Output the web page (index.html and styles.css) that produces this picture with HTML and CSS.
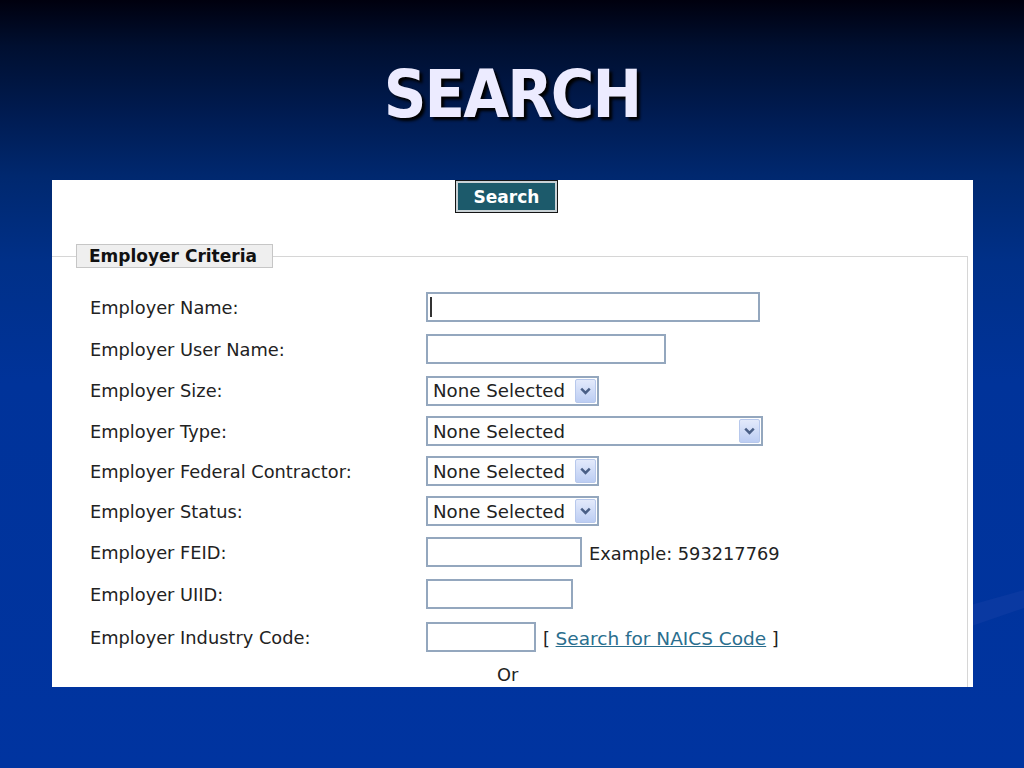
FILE: index.html
```html
<!DOCTYPE html>
<html lang="en">
<head>
  <meta charset="UTF-8" />
  <title>Search</title>
  <link rel="stylesheet" href="styles.css">
</head>
<body>
  <div class="streak"></div>
  <header class="slide-head">
    <h1>SEARCH</h1>
  </header>

  <div class="panel">
    <button class="search-btn">Search</button>

    <fieldset class="criteria">
      <legend>Employer Criteria</legend>

      <div class="form">
        <div class="row">
          <label>Employer Name:</label>
          <span class="caret-wrap">
            <input type="text" class="w-name" />
            <span class="caret"></span>
          </span>
        </div>
        <div class="row">
          <label>Employer User Name:</label>
          <input type="text" class="w-user" />
        </div>
        <div class="row sel first">
          <label>Employer Size:</label>
          <span class="pick w-small">
            <select><option>None Selected</option></select>
            <span class="arrow"><svg viewBox="0 0 20 24" width="20" height="24"><path d="M5.5 9.5 L10 14 L14.5 9.5" fill="none" stroke="#4a5f86" stroke-width="2.6"/></svg></span>
          </span>
        </div>
        <div class="row sel">
          <label>Employer Type:</label>
          <span class="pick w-wide">
            <select><option>None Selected</option></select>
            <span class="arrow"><svg viewBox="0 0 20 24" width="20" height="24"><path d="M5.5 9.5 L10 14 L14.5 9.5" fill="none" stroke="#4a5f86" stroke-width="2.6"/></svg></span>
          </span>
        </div>
        <div class="row sel">
          <label>Employer Federal Contractor:</label>
          <span class="pick w-small">
            <select><option>None Selected</option></select>
            <span class="arrow"><svg viewBox="0 0 20 24" width="20" height="24"><path d="M5.5 9.5 L10 14 L14.5 9.5" fill="none" stroke="#4a5f86" stroke-width="2.6"/></svg></span>
          </span>
        </div>
        <div class="row sel">
          <label>Employer Status:</label>
          <span class="pick w-small">
            <select><option>None Selected</option></select>
            <span class="arrow"><svg viewBox="0 0 20 24" width="20" height="24"><path d="M5.5 9.5 L10 14 L14.5 9.5" fill="none" stroke="#4a5f86" stroke-width="2.6"/></svg></span>
          </span>
        </div>
        <div class="row">
          <label>Employer FEID:</label>
          <input type="text" class="w-feid" />
          <span class="hint">Example: 593217769</span>
        </div>
        <div class="row">
          <label>Employer UIID:</label>
          <input type="text" class="w-uiid" />
        </div>
        <div class="row last">
          <label>Employer Industry Code:</label>
          <input type="text" class="w-code" />
          <span class="hint">[ <a href="#">Search for NAICS Code</a> ]</span>
        </div>
        <div class="or">Or</div>
      </div>
    </fieldset>
  </div>
</body>
</html>
```

FILE: styles.css
```css
body {
  margin: 0;
  width: 1024px;
  height: 768px;
  overflow: hidden;
  position: relative;
  font-family: 'DejaVu Sans', Verdana, sans-serif;
  background: linear-gradient(to bottom, #00000e 0%, #000f30 6%, #001a4e 14%, #00286f 23%, #003088 34%, #00339a 50%, #0034a0 100%);
}

/* faint diagonal light band on the right */
.streak {
  position: absolute;
  left: 960px;
  top: 590px;
  width: 64px;
  height: 40px;
  background: rgba(30, 70, 170, 0.35);
  clip-path: polygon(0 45%, 100% 0, 100% 45%, 0 100%);
}

.slide-head {
  height: 180px;
  box-sizing: border-box;
  padding-top: 60px;
  display: flex;
  justify-content: center;
}
.slide-head h1 {
  margin: 0;
  font-family: 'DejaVu Sans Condensed', 'DejaVu Sans', sans-serif;
  font-weight: bold;
  font-size: 66px;
  letter-spacing: -2px;
  line-height: 70px;
  color: #ecebff;
  text-shadow: 3px 3px 3px #000;
}

.panel {
  position: relative;
  margin-left: 52px;
  width: 921px;
  height: 507px;
  background: #fff;
  overflow: hidden;
}

.search-btn {
  display: block;
  margin-left: 403px;
  width: 103px;
  height: 33px;
  padding: 0;
  border: 1px solid #151515;
  box-shadow: inset 0 0 0 2px #c9d2d6;
  background: #1c5a6b;
  color: #fff;
  font-family: 'DejaVu Sans', sans-serif;
  font-weight: bold;
  font-size: 17px;
}

.criteria {
  margin: 31px 5px 0 0;
  padding: 18px 0 0 24px;
  height: 460px;
  border: 1px solid #d6d6d6;
  border-left: none;
}
.criteria legend {
  height: 24px;
  box-sizing: border-box;
  padding: 0 15px 0 12px;
  border: 1px solid #c6c6c6;
  background: #efefef;
  font-weight: bold;
  font-size: 17px;
  line-height: 22px;
  color: #111;
}

.form {
  margin-left: 14px;
  font-size: 17.8px;
  color: #222;
}
.row {
  display: flex;
  align-items: center;
  height: 42px;
}
.row.sel {
  height: 40px;
}
.row.sel.first {
  height: 41px;
}
.row.last {
  height: 44px;
}
.row label {
  flex: none;
  width: 336px;
}

input[type=text] {
  box-sizing: border-box;
  height: 30px;
  margin: 0;
  border: 2px solid #94a7be;
  background: #fff;
}
.w-name { width: 334px; }
.w-user { width: 240px; }
.w-feid { width: 156px; }
.w-uiid { width: 147px; }
.w-code { width: 110px; }

.caret-wrap {
  position: relative;
  display: flex;
}
.caret {
  position: absolute;
  left: 4px;
  top: 5px;
  width: 2px;
  height: 20px;
  background: #333;
}

.pick {
  position: relative;
  display: flex;
}
.pick select {
  -webkit-appearance: none;
  appearance: none;
  box-sizing: border-box;
  width: 100%;
  height: 30px;
  margin: 0;
  padding: 0 0 0 5px;
  border: 2px solid #94a7be;
  border-radius: 0;
  background: #fff;
  color: #222;
  font-family: 'DejaVu Sans', sans-serif;
  font-size: 18.2px;
}
.w-small { width: 173px; }
.w-wide { width: 337px; }
.arrow {
  position: absolute;
  right: 3px;
  top: 3px;
  width: 21px;
  height: 24px;
  box-sizing: border-box;
  border: 1px solid #b7c8ec;
  border-radius: 2px;
  background: linear-gradient(to bottom, #e3eafb, #bccdf3);
  display: flex;
  align-items: center;
  justify-content: center;
}

.hint {
  margin-left: 7px;
  padding-top: 3px;
}
.hint a {
  color: #2a6e8e;
  font-size: 18.5px;
}

.or {
  margin-left: 407px;
  height: 32px;
  line-height: 32px;
}
```
